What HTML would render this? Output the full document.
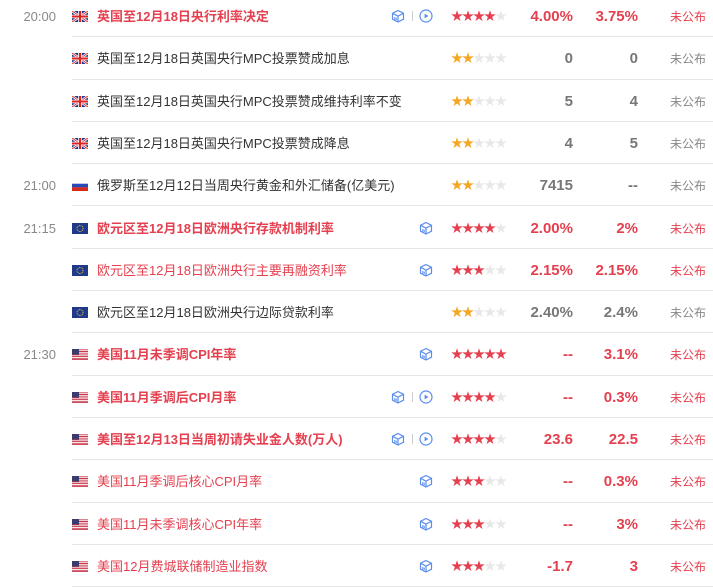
<!DOCTYPE html>
<html><head><meta charset="utf-8"><style>
*{margin:0;padding:0;box-sizing:border-box}
body{width:713px;height:584px;background:#fff;overflow:hidden;position:relative;font-family:"Liberation Sans","Noto Sans CJK SC",sans-serif;font-size:13px;color:#333}
.r{position:absolute;left:0;width:713px;height:42.3px;line-height:42px}
.r:after{content:"";position:absolute;left:72px;right:0;bottom:0;height:1px;background:#e6e6e6}
.t{position:absolute;left:0;width:56px;text-align:right;top:1px;color:#888;font-size:13px}
.f{position:absolute;left:72px;top:16px;width:16px;height:11px;overflow:hidden}
.n{position:absolute;left:97px;top:1px;white-space:nowrap}
.red .n{color:#e5404f}
.b .n{font-weight:bold}
.s{position:absolute;left:451px;top:0;font-size:12px;letter-spacing:-1px;color:#e8e8e8}
.s i{font-style:normal;color:#e5404f}
.s i.y{color:#f5a623}
.a,.p{position:absolute;top:1px;text-align:right;font-family:"Liberation Sans Narrow","Liberation Sans",sans-serif;font-size:15px;font-weight:bold;color:#777}
.a{right:140px}.p{right:75px}
.red .a,.red .p{color:#e5404f}
.u{position:absolute;left:670px;top:1px;font-size:12px;color:#888}
.red .u{color:#e5404f}
.ic{position:absolute;top:14px;width:14px;height:14px}
.dv{position:absolute;left:412px;top:16px;width:1px;height:10px;background:#ccc}
</style></head><body>
<svg width="0" height="0" style="position:absolute">
<defs>
<symbol id="cube" viewBox="0 0 14 14"><path d="M7 1.5L12.5 4.3V10.2L7 13L1.5 10.2V4.3Z M1.5 4.3L7 7.1L12.5 4.3 M7 7.1V13" fill="none" stroke="#5b8def" stroke-width="1.2" stroke-linejoin="round"/><path d="M3.8 8v2.5M5.2 8.6v2.5" stroke="#5b8def" stroke-width="1"/></symbol>
<symbol id="play" viewBox="0 0 14 14"><circle cx="7" cy="7" r="6" fill="none" stroke="#5b8def" stroke-width="1.2"/><path d="M5.6 4.6L9.4 7L5.6 9.4Z" fill="#5b8def"/></symbol>
<symbol id="uk" viewBox="0 0 16 11"><rect width="16" height="11" fill="#1f3a8a"/><path d="M0 0L16 11M16 0L0 11" stroke="#fff" stroke-width="2.4"/><path d="M0 0L16 11M16 0L0 11" stroke="#d22" stroke-width="0.9"/><path d="M8 0V11M0 5.5H16" stroke="#fff" stroke-width="3.6"/><path d="M8 0V11M0 5.5H16" stroke="#d22" stroke-width="2"/></symbol>
<symbol id="us" viewBox="0 0 16 11"><rect width="16" height="11" fill="#fff"/><path d="M0 .8H16M0 2.5H16M0 4.2H16M0 5.9H16M0 7.6H16M0 9.3H16M0 10.6H16" stroke="#c8384a" stroke-width="0.9"/><rect width="7" height="5.5" fill="#3c3b6e"/></symbol>
<symbol id="eu" viewBox="0 0 16 11"><rect width="16" height="11" fill="#1f3a8a"/><circle cx="8" cy="5.5" r="3" fill="none" stroke="#e8c23a" stroke-width="0.9" stroke-dasharray="0.9 0.7"/></symbol>
<symbol id="ru" viewBox="0 0 16 11"><rect width="16" height="11" fill="#fff"/><rect y="3.7" width="16" height="3.7" fill="#2a49b8"/><rect y="7.3" width="16" height="3.7" fill="#d52b1e"/></symbol>
</defs></svg>

<div class="r red b" style="top:-5px"><div class="t">20:00</div><svg class="f"><use href="#uk"/></svg><div class="n">英国至12月18日央行利率决定</div><svg class="ic" style="left:391px"><use href="#cube"/></svg><div class="dv"></div><svg class="ic" style="left:419px"><use href="#play"/></svg><div class="s"><i>★★★★</i>★</div><div class="a">4.00%</div><div class="p">3.75%</div><div class="u">未公布</div></div>

<div class="r" style="top:37.3px"><svg class="f"><use href="#uk"/></svg><div class="n">英国至12月18日英国央行MPC投票赞成加息</div><div class="s"><i class="y">★★</i>★★★</div><div class="a">0</div><div class="p">0</div><div class="u">未公布</div></div>

<div class="r" style="top:79.6px"><svg class="f"><use href="#uk"/></svg><div class="n">英国至12月18日英国央行MPC投票赞成维持利率不变</div><div class="s"><i class="y">★★</i>★★★</div><div class="a">5</div><div class="p">4</div><div class="u">未公布</div></div>

<div class="r" style="top:121.9px"><svg class="f"><use href="#uk"/></svg><div class="n">英国至12月18日英国央行MPC投票赞成降息</div><div class="s"><i class="y">★★</i>★★★</div><div class="a">4</div><div class="p">5</div><div class="u">未公布</div></div>

<div class="r" style="top:164.2px"><div class="t">21:00</div><svg class="f"><use href="#ru"/></svg><div class="n">俄罗斯至12月12日当周央行黄金和外汇储备(亿美元)</div><div class="s"><i class="y">★★</i>★★★</div><div class="a">7415</div><div class="p">--</div><div class="u">未公布</div></div>

<div class="r red b" style="top:206.5px"><div class="t">21:15</div><svg class="f"><use href="#eu"/></svg><div class="n">欧元区至12月18日欧洲央行存款机制利率</div><svg class="ic" style="left:419px"><use href="#cube"/></svg><div class="s"><i>★★★★</i>★</div><div class="a">2.00%</div><div class="p">2%</div><div class="u">未公布</div></div>

<div class="r red" style="top:248.8px"><svg class="f"><use href="#eu"/></svg><div class="n">欧元区至12月18日欧洲央行主要再融资利率</div><svg class="ic" style="left:419px"><use href="#cube"/></svg><div class="s"><i>★★★</i>★★</div><div class="a">2.15%</div><div class="p">2.15%</div><div class="u">未公布</div></div>

<div class="r" style="top:291.1px"><svg class="f"><use href="#eu"/></svg><div class="n">欧元区至12月18日欧洲央行边际贷款利率</div><div class="s"><i class="y">★★</i>★★★</div><div class="a">2.40%</div><div class="p">2.4%</div><div class="u">未公布</div></div>

<div class="r red b" style="top:333.4px"><div class="t">21:30</div><svg class="f"><use href="#us"/></svg><div class="n">美国11月未季调CPI年率</div><svg class="ic" style="left:419px"><use href="#cube"/></svg><div class="s"><i>★★★★★</i></div><div class="a">--</div><div class="p">3.1%</div><div class="u">未公布</div></div>

<div class="r red b" style="top:375.7px"><svg class="f"><use href="#us"/></svg><div class="n">美国11月季调后CPI月率</div><svg class="ic" style="left:391px"><use href="#cube"/></svg><div class="dv"></div><svg class="ic" style="left:419px"><use href="#play"/></svg><div class="s"><i>★★★★</i>★</div><div class="a">--</div><div class="p">0.3%</div><div class="u">未公布</div></div>

<div class="r red b" style="top:418px"><svg class="f"><use href="#us"/></svg><div class="n">美国至12月13日当周初请失业金人数(万人)</div><svg class="ic" style="left:391px"><use href="#cube"/></svg><div class="dv"></div><svg class="ic" style="left:419px"><use href="#play"/></svg><div class="s"><i>★★★★</i>★</div><div class="a">23.6</div><div class="p">22.5</div><div class="u">未公布</div></div>

<div class="r red" style="top:460.3px"><svg class="f"><use href="#us"/></svg><div class="n">美国11月季调后核心CPI月率</div><svg class="ic" style="left:419px"><use href="#cube"/></svg><div class="s"><i>★★★</i>★★</div><div class="a">--</div><div class="p">0.3%</div><div class="u">未公布</div></div>

<div class="r red" style="top:502.6px"><svg class="f"><use href="#us"/></svg><div class="n">美国11月未季调核心CPI年率</div><svg class="ic" style="left:419px"><use href="#cube"/></svg><div class="s"><i>★★★</i>★★</div><div class="a">--</div><div class="p">3%</div><div class="u">未公布</div></div>

<div class="r red" style="top:544.9px"><svg class="f"><use href="#us"/></svg><div class="n">美国12月费城联储制造业指数</div><svg class="ic" style="left:419px"><use href="#cube"/></svg><div class="s"><i>★★★</i>★★</div><div class="a">-1.7</div><div class="p">3</div><div class="u">未公布</div></div>
</body></html>
